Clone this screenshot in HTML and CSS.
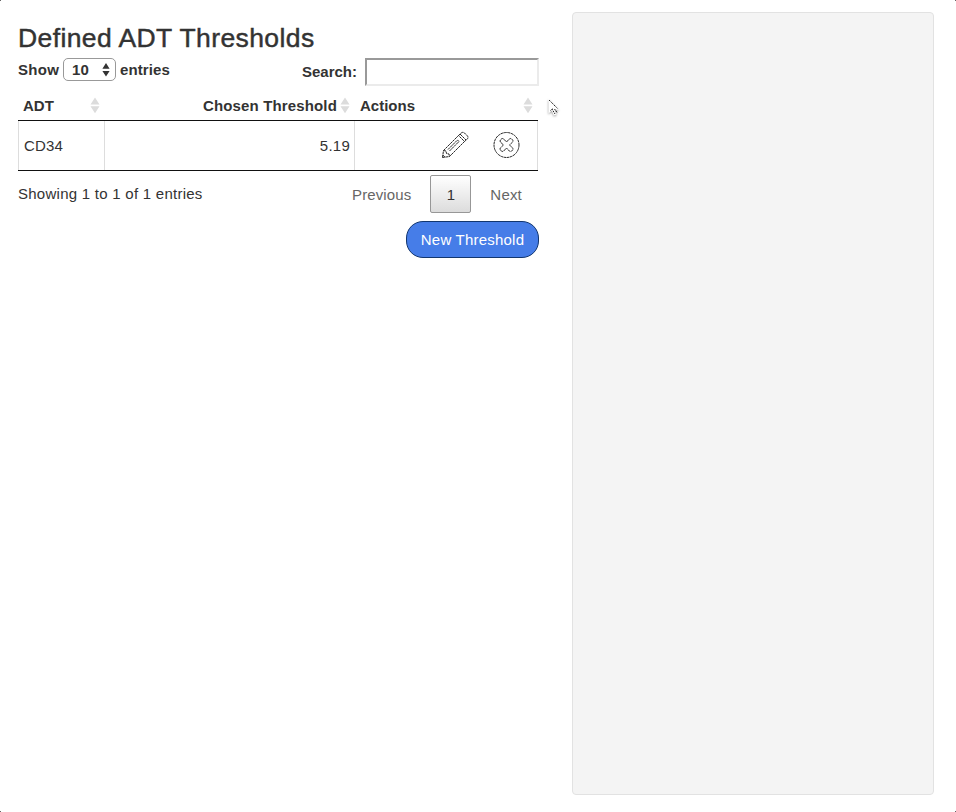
FILE: index.html
```html
<!DOCTYPE html>
<html lang="en">
<head>
<meta charset="utf-8">
<title>Defined ADT Thresholds</title>
<link rel="stylesheet" href="styles.css">
</head>
<body>
<svg width="0" height="0" class="defs"><symbol id="sort" viewBox="0 0 10 17"><path d="M5 .5 9.500 7.500H.5zM.5 9.200h9L5 16.200z" fill="#dcdcdc"/></symbol></svg>
<div class="page">
  <main class="main">
    <h1>Defined ADT Thresholds</h1>
    <div class="controls">
      <div class="length"><span class="show">Show</span>
        <span class="select"><span>10</span><svg width="8" height="14" viewBox="0 0 8 14"><path d="M4 0 7.600 5.800H.4zM.4 8h7.200L4 13.600z" fill="#333"/></svg></span>
        <span>entries</span></div>
      <label class="search"><span>Search:</span><input type="text"></label>
    </div>
    <table>
      <thead><tr>
        <th class="c1"><div><span>ADT</span><svg width="10" height="17"><use href="#sort"/></svg></div></th>
        <th class="c2"><div><span>Chosen Threshold</span><svg width="10" height="17"><use href="#sort"/></svg></div></th>
        <th class="c3"><div><span>Actions</span><svg width="10" height="17"><use href="#sort"/></svg></div></th>
      </tr></thead>
      <tbody><tr>
        <td>CD34</td><td class="num">5.19</td>
        <td><div class="actions">
          <svg width="28" height="28" viewBox="0 0 28 28"><path d="M1.500 26.500 2.500 19.500 17.500 4.500 23.500 10.500 8.500 25.500zM2.500 19.500l2.500.5.5 2.500 2.500.5.5 2.500M1.800 24l2.200 2.200M7 18.500 16.500 9l1.500 1.500-9.500 9.500M19 3l6 6M17.500 4.500l3-2.700q1.500-1 3 .2l2.800 2.800q1.200 1.500.2 3l-3 2.700"/></svg>
          <svg width="28" height="28" viewBox="0 0 28 28"><circle cx="13.500" cy="14" r="12.500"/><path transform="translate(-.5)" d="m14 11 2.800-3q1.200-1 2.400 0l.8.800q1 1.200 0 2.400L17 14l3 2.800q1 1.200 0 2.400l-.8.800q-1.200 1-2.400 0L14 17 11.200 20q-1.200 1-2.400 0L8 19.200q-1-1.200 0-2.400L11 14 8 11.200q-1-1.200 0-2.400L8.800 8q1.200-1 2.400 0z"/></svg>
        </div></td>
      </tr></tbody>
    </table>
    <div class="footer">
      <div class="info">Showing 1 to 1 of 1 entries</div>
      <div class="pager"><span class="prev">Previous</span><span class="current">1</span><span class="next">Next</span></div>
    </div>
    <button class="new" type="button">New Threshold</button>
  </main>
  <aside class="panel"></aside>
</div>
<svg class="cursor" width="14" height="20" viewBox="0 0 14 20"><path d="M1.500 1v14.500l3.300-3 2 5 2.700-1-2-4.800h4.500z" fill="#fff"/><path d="m2 2 8.500 8.500M5 11l3 5M7.500 11l3 4M3.500 12.500l2-2" stroke="#222" stroke-dasharray="1.500 .8" fill="none"/></svg>
<i class="corner tl"></i><i class="corner tr"></i><i class="corner bl"></i><i class="corner br"></i>
</body>
</html>
```
FILE: styles.css
```css
* { box-sizing: border-box; }
body { margin: 0; background: #fff; color: #333; font: 15px/20px "Liberation Sans", Arial, sans-serif; }
.defs { position: absolute; }
.page { display: flex; justify-content: space-between; width: 956px; height: 812px; padding: 12px 22px 17px 18px; }
.main { width: 521px; }
h1 { margin: 11px 0 5px; font-size: 26.5px; line-height: 30px; font-weight: 400; letter-spacing: 0.4px; -webkit-text-stroke: 0.45px #333; white-space: nowrap; }
.controls { display: flex; justify-content: space-between; height: 28px; font-weight: 700; }
.length { display: flex; height: 23px; align-items: center; gap: 4px; letter-spacing: 0.1px; }
.show { width: 41px; letter-spacing: 0.3px; }
.select { display: flex; align-items: center; justify-content: space-between; width: 53px; height: 23px; padding: 0 5px 0 8px; border: 1px solid #999; border-radius: 5px; }
.search { display: flex; align-items: center; gap: 8px; }
.search input { width: 174px; height: 28px; margin: 0; padding: 1px; border: 2px solid; border-color: #999 #ebebeb #ebebeb #999; background: #fff; }
table { width: 520px; table-layout: fixed; border-collapse: separate; border-spacing: 0; border-bottom: 1px solid #111; }
th { height: 35px; padding: 5px 5px 0; border-bottom: 1px solid #111; text-align: left; }
th div { display: flex; align-items: center; justify-content: space-between; }
th svg { display: block; }
.c1 { width: 87px; }
.c2 { width: 250px; letter-spacing: 0.15px; }
.c2 div { justify-content: flex-end; gap: 3px; }
td { height: 49px; padding: 0 5px; border-right: 1px solid #ddd; letter-spacing: 0.15px; }
td:first-child { border-left: 1px solid #ddd; }
.num { text-align: right; padding-right: 4px; letter-spacing: 0.25px; }
.actions { display: flex; justify-content: flex-end; gap: 24px; padding-right: 11px; margin-top: -1px; }
.actions svg { display: block; fill: none; stroke: #111; stroke-width: 0.9; stroke-linejoin: round; stroke-dasharray: 2.8 0.5; }
.footer { display: flex; justify-content: space-between; height: 50px; padding-top: 4px; }
.info { padding-top: 9px; letter-spacing: 0.26px; }
.pager { display: flex; height: 38px; line-height: 40px; color: #666; }
.prev { letter-spacing: 0.12px; }
.current { width: 41px; height: 38px; margin: 0 19px; border: 1px solid #979797; border-radius: 2px; background: linear-gradient(#fff, #dcdcdc); color: #333; line-height: 38px; text-align: center; }
.next { padding-right: 17px; letter-spacing: 0.2px; }
.new { display: block; width: 133px; height: 37px; margin: 0 0 0 auto; padding: 0; border: 1px solid #12366f; border-radius: 17px; background: #467de8; color: #fff; font: inherit; letter-spacing: 0.22px; }
.panel { width: 362px; height: 783px; border: 1px solid #e2e2e2; border-radius: 4px; background: #f4f4f4; }
.cursor { position: absolute; left: 547px; top: 98px; filter: drop-shadow(0 1px 1px rgba(0, 0, 0, .4)); }
.corner { position: absolute; width: 1px; height: 1px; background: #666; }
.tl { left: 0; top: 0; }
.tr { left: 955px; top: 0; }
.bl { left: 0; top: 811px; }
.br { left: 955px; top: 811px; }
```
